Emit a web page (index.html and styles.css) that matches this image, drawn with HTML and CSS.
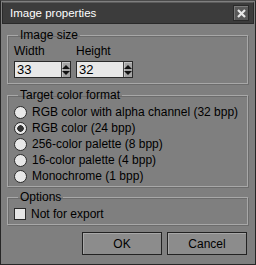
FILE: index.html
```html
<!DOCTYPE html>
<html>
  <head>
    <title>Image properties</title>
    <link rel="stylesheet" href="styles.css">
  </head>
  <body>
    <div class="dialog">
      <div class="titlebar">
        <span class="title">Image properties</span>
        <button class="close" title="Close">
          <svg width="9" height="9" viewBox="0 0 9 9">
            <path d="M1 1 L8 8 M8 1 L1 8" stroke="#e8e8e8" stroke-width="2.2"/>
          </svg>
        </button>
      </div>

      <fieldset class="group size-group">
        <legend>Image size</legend>
        <div class="fields">
          <div class="field">
            <label>Width</label>
            <div class="spin">
              <input type="text" value="33">
              <div class="spin-btn"><span class="up"></span><span class="down"></span></div>
            </div>
          </div>
          <div class="field">
            <label>Height</label>
            <div class="spin">
              <input type="text" value="32">
              <div class="spin-btn"><span class="up"></span><span class="down"></span></div>
            </div>
          </div>
        </div>
      </fieldset>

      <fieldset class="group format-group">
        <legend>Target color format</legend>
        <label class="option"><span class="radio"></span>RGB color with alpha channel (32 bpp)</label>
        <label class="option"><span class="radio checked"></span>RGB color (24 bpp)</label>
        <label class="option"><span class="radio"></span>256-color palette (8 bpp)</label>
        <label class="option"><span class="radio"></span>16-color palette (4 bpp)</label>
        <label class="option"><span class="radio"></span>Monochrome (1 bpp)</label>
      </fieldset>

      <fieldset class="group options-group">
        <legend>Options</legend>
        <label class="option"><span class="check"></span>Not for export</label>
      </fieldset>

      <div class="buttons">
        <button class="btn">OK</button>
        <button class="btn">Cancel</button>
      </div>
    </div>
  </body>
</html>
```

FILE: styles.css
```css
body {
  margin: 0;
  background: #7f7f7f;
  font-family: "Liberation Sans", Arial, sans-serif;
  font-size: 12px;
  color: #000;
}
.dialog {
  width: 256px;
  height: 265px;
  box-sizing: border-box;
  border: 1px solid #262626;
  border-top-color: #4a4a4a;
  background: #7f7f7f;
  padding: 1px 0 0 0;
  display: flex;
  flex-direction: column;
}
.titlebar {
  height: 22px;
  margin: 0 1px;
  box-sizing: border-box;
  border: 1px solid #2a2a2a;
  border-top-color: #5c5c5c;
  background: #3c3c3c;
  display: flex;
  align-items: center;
  justify-content: space-between;
  padding: 0 4px 0 7px;
}
.title {
  color: #fff;
  font-size: 11.5px;
}
.close {
  width: 16px;
  height: 16px;
  padding: 0;
  border: 1px solid #2a2a2a;
  background: #595959;
  box-shadow: inset 1px 1px #7a7a7a;
  display: flex;
  align-items: center;
  justify-content: center;
}
.group {
  margin: 0 7px 0 6px;
  padding: 0 7px;
  border: 1px solid #a8a8a8;
  box-shadow: 1px 1px #6c6c6c, inset 1px 1px #6c6c6c;
}
.group legend {
  padding: 0 2px;
  margin-left: 3px;
  line-height: 14px;
}
.size-group {
  margin-top: 4px;
  height: 56px;
  box-sizing: border-box;
}
.fields {
  display: flex;
  gap: 5px;
  margin-left: -1px;
}
.field label {
  display: block;
  line-height: 14px;
  margin-top: 2px;
  margin-bottom: 3px;
}
.spin {
  display: flex;
  width: 57px;
  height: 17px;
  box-sizing: border-box;
  border: 1px solid #2a2a2a;
  background: #e8e8e8;
}
.spin input {
  width: 42px;
  border: none;
  padding: 0 2px;
  font: inherit;
  font-size: 13px;
  background: transparent;
  outline: none;
}
.spin-btn {
  width: 13px;
  border-left: 1px solid #444;
  background: #a4a4a4;
  box-shadow: inset 1px 1px #c4c4c4;
  display: flex;
  flex-direction: column;
  align-items: center;
  justify-content: center;
  gap: 2px;
}
.spin-btn .up {
  border-left: 4px solid transparent;
  border-right: 4px solid transparent;
  border-bottom: 4px solid #111;
}
.spin-btn .down {
  border-left: 4px solid transparent;
  border-right: 4px solid transparent;
  border-top: 4px solid #111;
}
.format-group {
  margin-top: 4px;
  padding-top: 2px;
  padding-bottom: 2px;
}
.option {
  display: flex;
  align-items: center;
  height: 16px;
  gap: 5px;
  margin-left: -1px;
}
.radio {
  width: 11px;
  height: 11px;
  border-radius: 50%;
  border: 1px solid #2a2a2a;
  background: #e8e8e8;
  display: inline-block;
}
.radio.checked {
  background: radial-gradient(circle, #333 0 3px, #e8e8e8 3.5px);
}
.check {
  width: 10px;
  height: 10px;
  border: 1px solid #2a2a2a;
  background: #e6e6e6;
  display: inline-block;
}
.options-group {
  margin-top: 3px;
  padding-top: 2px;
  padding-bottom: 2px;
}
.buttons {
  display: flex;
  justify-content: flex-end;
  gap: 5px;
  margin: 7px 8px 0 0;
}
.btn {
  width: 80px;
  height: 23px;
  border: 1px solid #222;
  background: #8c8c8c;
  box-shadow: inset 1px 1px #a8a8a8;
  font: inherit;
  font-size: 12px;
  color: #000;
}
```
